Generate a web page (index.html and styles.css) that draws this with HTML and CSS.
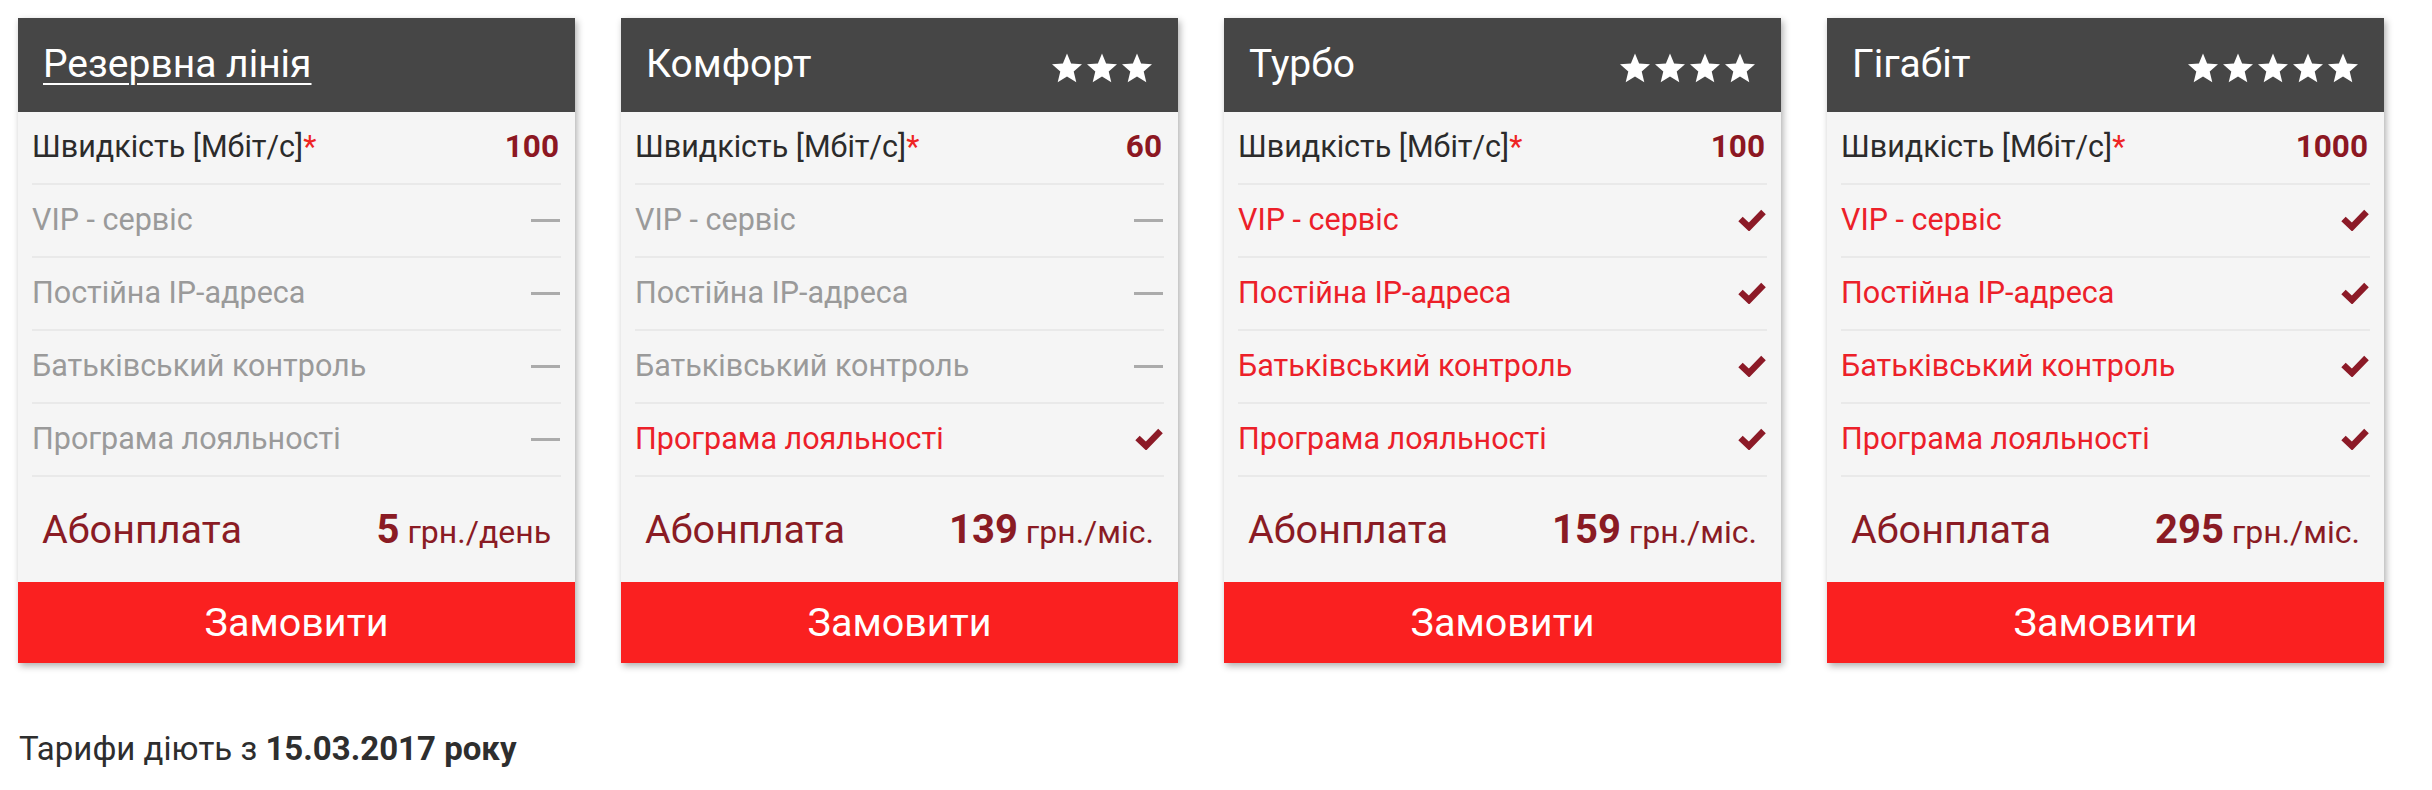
FILE: index.html
```html
<!DOCTYPE html>
<html lang="uk">
<head>
<meta charset="utf-8">
<title>Тарифи</title>
<link rel="stylesheet" href="styles.css">
</head>
<body>
<svg width="0" height="0" class="defs" aria-hidden="true">
  <defs>
    <symbol id="star" viewBox="0 0 32 30">
      <polygon points="16,0.5 20.1,10.4 31,11.3 22.7,18.4 25.3,29.2 16,23.5 6.7,29.2 9.3,18.4 1,11.3 11.9,10.4" fill="#fff"/>
    </symbol>
    <symbol id="check" viewBox="0 0 28 23">
      <polyline points="2.5,11 11,19 25.5,4" fill="none" stroke="#8c1a27" stroke-width="6.4" stroke-linejoin="miter"/>
    </symbol>
  </defs>
</svg>
<main class="page">
  <div class="cards">
    <section class="card">
      <header class="card-head">
        <a class="title title-link" href="#">Резервна лінія</a>
      </header>
      <ul class="features">
        <li class="row"><span class="label">Швидкість [Мбіт/с]<span class="ast">*</span></span><span class="speed">100</span></li>
        <li class="row off"><span class="label">VIP - сервіс</span><span class="dash"></span></li>
        <li class="row off"><span class="label">Постійна IP-адреса</span><span class="dash"></span></li>
        <li class="row off"><span class="label">Батьківський контроль</span><span class="dash"></span></li>
        <li class="row off"><span class="label">Програма лояльності</span><span class="dash"></span></li>
      </ul>
      <div class="fee"><span class="fee-label">Абонплата</span><span class="price"><b>5</b> грн./день</span></div>
      <a class="order" href="#">Замовити</a>
    </section>

    <section class="card">
      <header class="card-head">
        <span class="title">Комфорт</span>
        <span class="stars"><svg class="star"><use href="#star"/></svg><svg class="star"><use href="#star"/></svg><svg class="star"><use href="#star"/></svg></span>
      </header>
      <ul class="features">
        <li class="row"><span class="label">Швидкість [Мбіт/с]<span class="ast">*</span></span><span class="speed">60</span></li>
        <li class="row off"><span class="label">VIP - сервіс</span><span class="dash"></span></li>
        <li class="row off"><span class="label">Постійна IP-адреса</span><span class="dash"></span></li>
        <li class="row off"><span class="label">Батьківський контроль</span><span class="dash"></span></li>
        <li class="row on"><span class="label">Програма лояльності</span><svg class="check"><use href="#check"/></svg></li>
      </ul>
      <div class="fee"><span class="fee-label">Абонплата</span><span class="price"><b>139</b> грн./міс.</span></div>
      <a class="order" href="#">Замовити</a>
    </section>

    <section class="card">
      <header class="card-head">
        <span class="title">Турбо</span>
        <span class="stars"><svg class="star"><use href="#star"/></svg><svg class="star"><use href="#star"/></svg><svg class="star"><use href="#star"/></svg><svg class="star"><use href="#star"/></svg></span>
      </header>
      <ul class="features">
        <li class="row"><span class="label">Швидкість [Мбіт/с]<span class="ast">*</span></span><span class="speed">100</span></li>
        <li class="row on"><span class="label">VIP - сервіс</span><svg class="check"><use href="#check"/></svg></li>
        <li class="row on"><span class="label">Постійна IP-адреса</span><svg class="check"><use href="#check"/></svg></li>
        <li class="row on"><span class="label">Батьківський контроль</span><svg class="check"><use href="#check"/></svg></li>
        <li class="row on"><span class="label">Програма лояльності</span><svg class="check"><use href="#check"/></svg></li>
      </ul>
      <div class="fee"><span class="fee-label">Абонплата</span><span class="price"><b>159</b> грн./міс.</span></div>
      <a class="order" href="#">Замовити</a>
    </section>

    <section class="card">
      <header class="card-head">
        <span class="title">Гігабіт</span>
        <span class="stars"><svg class="star"><use href="#star"/></svg><svg class="star"><use href="#star"/></svg><svg class="star"><use href="#star"/></svg><svg class="star"><use href="#star"/></svg><svg class="star"><use href="#star"/></svg></span>
      </header>
      <ul class="features">
        <li class="row"><span class="label">Швидкість [Мбіт/с]<span class="ast">*</span></span><span class="speed">1000</span></li>
        <li class="row on"><span class="label">VIP - сервіс</span><svg class="check"><use href="#check"/></svg></li>
        <li class="row on"><span class="label">Постійна IP-адреса</span><svg class="check"><use href="#check"/></svg></li>
        <li class="row on"><span class="label">Батьківський контроль</span><svg class="check"><use href="#check"/></svg></li>
        <li class="row on"><span class="label">Програма лояльності</span><svg class="check"><use href="#check"/></svg></li>
      </ul>
      <div class="fee"><span class="fee-label">Абонплата</span><span class="price"><b>295</b> грн./міс.</span></div>
      <a class="order" href="#">Замовити</a>
    </section>
  </div>
  <p class="note">Тарифи діють з <b>15.03.2017 року</b></p>
</main>
</body>
</html>
```

FILE: styles.css
```css
* { box-sizing: border-box; }

html, body {
  margin: 0;
  padding: 0;
  background: #fff;
}

body {
  font-family: Roboto, "Noto Sans", "Liberation Sans", sans-serif;
  color: #333;
}

.defs {
  position: absolute;
  width: 0;
  height: 0;
  overflow: hidden;
}

.page {
  padding: 18px 0 0 18px;
}

.cards {
  display: flex;
  gap: 46px;
}

.card {
  width: 557px;
  flex: 0 0 557px;
  background: #f5f5f5;
  display: flex;
  flex-direction: column;
  box-shadow: 2px 3px 7px rgba(0, 0, 0, 0.32);
}

.card-head {
  height: 94px;
  background: #464646;
  display: flex;
  align-items: center;
  justify-content: space-between;
  padding: 0 25px 0 25px;
}

.title {
  color: #fff;
  font-size: 39px;
  line-height: 1;
  padding-bottom: 2px;
}

.title-link {
  text-decoration: underline;
  text-decoration-thickness: 2px;
  text-underline-offset: 6px;
}

.stars {
  display: flex;
  gap: 3px;
  padding-top: 5px;
}

.star {
  width: 32px;
  height: 30px;
  display: block;
}

.features {
  list-style: none;
  margin: 0 14px;
  padding: 0;
}

.row {
  height: 73px;
  display: flex;
  align-items: center;
  justify-content: space-between;
  border-bottom: 2px solid #e9e9e9;
  font-size: 30.5px;
  padding-bottom: 2px;
}

.label {
  color: #2b2b2b;
}

.ast {
  color: #ee2424;
}

.speed {
  color: #8c1722;
  font-weight: 700;
  font-size: 31.5px;
  padding-right: 2px;
}

.row.off .label {
  color: #9a9a9a;
}

.dash {
  display: block;
  width: 29px;
  height: 3px;
  background: #ababab;
  margin-right: 1px;
  margin-top: 2px;
}

.row.on .label {
  color: #ec2029;
}

.check {
  width: 28px;
  height: 23px;
  display: block;
  margin-right: 1px;
}

.fee {
  height: 105px;
  display: flex;
  align-items: center;
  justify-content: space-between;
  padding: 0 24px 0 24px;
  color: #8a1b24;
}

.fee-label {
  font-size: 39.5px;
}

.price {
  font-size: 32px;
}

.price b {
  font-size: 40px;
  font-weight: 700;
}

.order {
  height: 81px;
  background: #fa2020;
  color: #fff;
  font-size: 39.5px;
  text-decoration: none;
  display: flex;
  align-items: center;
  justify-content: center;
}

.note {
  margin: 66px 0 0 1px;
  font-size: 33px;
  line-height: 40px;
  color: #2e2e2e;
}

.note b {
  font-weight: 700;
}
```
